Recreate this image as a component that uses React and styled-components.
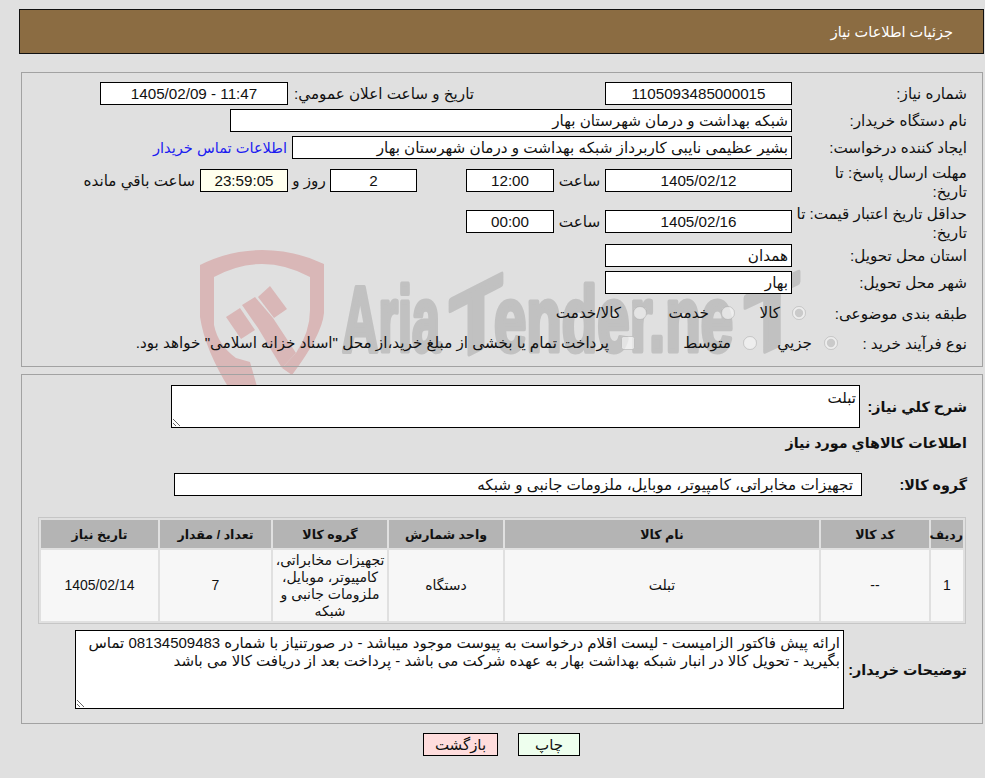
import React from "react";
import styled, { createGlobalStyle } from "styled-components";

const Global = createGlobalStyle`
  html, body { margin: 0; padding: 0; background: #e0e0e0; }
  body { font-family: "Liberation Sans", "DejaVu Sans", sans-serif; font-size: 15.2px; color: #111; }
  * { box-sizing: border-box; }
`;

const Page = styled.div`
  position: relative;
  width: 985px;
  height: 778px;
  overflow: hidden;
  padding-top: 9px;
`;

const Watermark = styled.svg`
  position: absolute;
  left: 0;
  top: 0;
  width: 985px;
  height: 778px;
  z-index: 0;
  pointer-events: none;
`;

const Content = styled.div`
  position: relative;
  z-index: 1;
`;

const Header = styled.header`
  height: 45px;
  margin: 0 1px 0 19px;
  border: 1px solid #111;
  background: #8b6c42;
  color: #fff;
  display: flex;
  align-items: center;
  padding-right: 30px;
  font-size: 14.5px;
`;

const Panel = styled.section`
  height: ${(p) => p.$h}px;
  margin: ${(p) => p.$top}px 2px 0 21px;
  border: 1px solid #a2a2a2;
  padding: ${(p) => p.$pt}px 15px 0 16px;
`;

const Row = styled.div`
  display: flex;
  align-items: center;
  margin-top: ${(p) => p.$top || 0}px;
  min-height: ${(p) => p.$h || 23}px;
`;

const Label = styled.div`
  flex: none;
  width: ${(p) => p.$w || 175}px;
  line-height: 19px;
  white-space: nowrap;
`;

const Strong = styled.div`
  flex: none;
  width: ${(p) => p.$w}px;
  font-weight: bold;
  font-size: 14.3px;
  white-space: nowrap;
`;

const Heading = styled.div`
  font-weight: bold;
  font-size: 14.3px;
  line-height: 20px;
  margin-top: 5px;
`;

const Inline = styled.div`
  display: flex;
  align-items: center;
  margin-bottom: ${(p) => p.$mb || 0}px;
`;

const Box = styled.div`
  flex: none;
  width: ${(p) => p.$w}px;
  height: 23px;
  border: 1px solid #000;
  background: ${(p) => p.$bg || "#fff"};
  text-align: ${(p) => (p.$center ? "center" : "right")};
  padding: 0 ${(p) => p.$pad ?? 3}px;
  line-height: 21px;
  white-space: nowrap;
  overflow: hidden;
`;

const Unit = styled.div`
  flex: none;
  width: ${(p) => p.$w}px;
  text-align: center;
`;

const Note = styled.div`
  flex: none;
  margin-right: ${(p) => p.$before || 0}px;
  width: ${(p) => p.$w || "auto"};
  white-space: nowrap;
`;

const Link = styled.a`
  color: #1c1cf0;
  text-decoration: none;
  font-size: 14.6px;
  margin-right: 5px;
  white-space: nowrap;
`;

const Choice = styled.label`
  display: flex;
  align-items: center;
  gap: 12px;
  width: ${(p) => p.$w || "auto"};
  flex: none;
  white-space: nowrap;
`;

const Radio = styled.input`
  width: 14px;
  height: 14px;
  margin: 0;
  flex: none;
`;

const Area = styled.textarea`
  display: block;
  flex: none;
  width: ${(p) => p.$w}px;
  height: ${(p) => p.$h}px;
  border: 1px solid #000;
  border-radius: 0;
  outline: none;
  background: #fff;
  color: #111;
  font-family: "Liberation Sans", "DejaVu Sans", sans-serif;
  font-size: 15px;
  line-height: 18px;
  padding: 3px;
  margin: 0;
`;

const Table = styled.table`
  width: 928px;
  margin: 21px 1px 0 0;
  table-layout: fixed;
  border-collapse: separate;
  border-spacing: 2px;
  border: 1px solid #c6c6c6;
`;

const Th = styled.th`
  width: ${(p) => p.$w}px;
  height: 28px;
  background: #b4b4b4;
  font-size: 12.6px;
  font-weight: bold;
  padding: 0;
`;

const Td = styled.td`
  height: 71px;
  background: #f7f7f7;
  font-size: 14px;
  line-height: 17px;
  text-align: center;
  padding: 0 ${(p) => p.$pad || 0}px;
`;

const Actions = styled.div`
  display: flex;
  justify-content: center;
  gap: 20px;
  margin-top: 9px;
  padding-left: 18px;
`;

const Button = styled.button`
  width: ${(p) => p.$w}px;
  height: 23px;
  border: 1px solid #000;
  border-radius: 0;
  background: ${(p) => p.$bg};
  color: #111;
  font-family: "Liberation Sans", "DejaVu Sans", sans-serif;
  font-size: 15px;
  padding: 0;
`;

const columns = [
  ["ردیف", 32],
  ["کد کالا", 108],
  ["نام کالا", 314],
  ["واحد شمارش", 114],
  ["گروه کالا", 114],
  ["تعداد / مقدار", 111],
  ["تاریخ نیاز", 117],
];

const buyerNote =
  "ارائه پیش فاکتور الزامیست - لیست اقلام درخواست به پیوست موجود میباشد - در صورتنیاز با شماره 08134509483 تماس بگیرید - تحویل کالا در انبار شبکه بهداشت بهار به عهده شرکت می باشد - پرداخت بعد از دریافت کالا می باشد";

const groupName = "تجهیزات مخابراتی، کامپیوتر، موبایل، ملزومات جانبی و شبکه";

const logoFont = {
  fill: "#c1c1c1",
  stroke: "#c1c1c1",
  strokeWidth: 5,
  strokeLinejoin: "round",
  fontFamily: "Liberation Sans, sans-serif",
  fontWeight: "bold",
  fontSize: 92,
  direction: "ltr",
  lengthAdjust: "spacingAndGlyphs",
};

export default function App() {
  return (
    <Page dir="rtl">
      <Global />
      <Watermark viewBox="0 0 985 778" aria-hidden="true">
        <path
          fill="#d9b7b7"
          d="M200 265 Q230 250 262 250 Q295 250 324 264 L324 313 Q322 335 292 375 L282 368 L296 353 Q310 332 310 310 L310 277 Q286 264 262 264 Q238 264 214 277 L214 325 Q218 345 236 358 L250 362 L258 390 L230 390 Q205 350 200 317 Z"
        />
        <path fill="#d9b7b7" d="M226 317 L240 308 L255 330 L241 339 Z" />
        <path fill="#d9b7b7" d="M242 305 L255 297 L273 318 L296 353 L282 368 L258 328 Z" />
        <path fill="#d9b7b7" d="M258 297 L270 286 L287 309 L274 318 Z" />
        <text x="342" y="351" textLength="98" {...logoFont}>Aria</text>
        <text x="450" y="351" textLength="52" transform="translate(0 14) skewY(-27) translate(0 228)" {...logoFont}>T</text>
        <text x="494" y="351" textLength="239" {...logoFont}>ender.ne</text>
        <text x="745" y="351" textLength="54" transform="translate(0 10) skewY(-25) translate(0 347)" {...logoFont}>T</text>
      </Watermark>
      <Content>
        <Header>جزئیات اطلاعات نیاز</Header>

        <Panel $h={295} $top={18} $pt={9}>
          <Row>
            <Label>شماره نیاز:</Label>
            <Box $w={187} $center>1105093485000015</Box>
            <Note $before={131} $w="186px">تاریخ و ساعت اعلان عمومي:</Note>
            <Box $w={188} $center>11:47 - 1405/02/09</Box>
          </Row>
          <Row $top={4}>
            <Label>نام دستگاه خریدار:</Label>
            <Box $w={562}>شبکه بهداشت و درمان شهرستان بهار</Box>
          </Row>
          <Row $top={4}>
            <Label>ایجاد کننده درخواست:</Label>
            <Box $w={500}>بشیر عظیمی نایبی کاربرداز شبکه بهداشت و درمان شهرستان بهار</Box>
            <Link href="#">اطلاعات تماس خریدار</Link>
          </Row>
          <Row $top={4} $h={38}>
            <Label>مهلت ارسال پاسخ: تا<br />تاریخ:</Label>
            <Inline $mb={3}>
              <Box $w={187} $center>1405/02/12</Box>
              <Unit $w={51}>ساعت</Unit>
              <Box $w={88} $center>12:00</Box>
              <Unit $w={49} />
              <Box $w={87} $center>2</Box>
              <Unit $w={42}>روز و</Unit>
              <Box $w={88} $center $bg="#ffffee">23:59:05</Box>
              <Note $before={5}>ساعت باقي مانده</Note>
            </Inline>
          </Row>
          <Row $top={3} $h={38}>
            <Label>حداقل تاریخ اعتبار قیمت: تا<br />تاریخ:</Label>
            <Inline $mb={3}>
              <Box $w={187} $center>1405/02/16</Box>
              <Unit $w={51}>ساعت</Unit>
              <Box $w={88} $center>00:00</Box>
            </Inline>
          </Row>
          <Row $top={2}>
            <Label>استان محل تحویل:</Label>
            <Box $w={187}>همدان</Box>
          </Row>
          <Row $top={4}>
            <Label>شهر محل تحویل:</Label>
            <Box $w={187}>بهار</Box>
          </Row>
          <Row $top={8} $h={22}>
            <Label $w={161}>طبقه بندی موضوعی:</Label>
            <Choice $w="71px"><Radio type="radio" name="kind" disabled defaultChecked />کالا</Choice>
            <Choice $w="88px"><Radio type="radio" name="kind" disabled />خدمت</Choice>
            <Choice><Radio type="radio" name="kind" disabled />کالا/خدمت</Choice>
          </Row>
          <Row $top={8} $h={22}>
            <Label $w={129}>نوع فرآیند خرید :</Label>
            <Choice $w="81px"><Radio type="radio" name="proc" disabled defaultChecked />جزیي</Choice>
            <Choice $w="122px"><Radio type="radio" name="proc" disabled />متوسط</Choice>
            <Choice><Radio type="checkbox" disabled />پرداخت تمام یا بخشی از مبلغ خرید،از محل "اسناد خزانه اسلامی" خواهد بود.</Choice>
          </Row>
        </Panel>

        <Panel $h={350} $top={7} $pt={10}>
          <Row>
            <Strong $w={107}>شرح کلي نیاز:</Strong>
            <Area $w={689} $h={43} readOnly value="تبلت" />
          </Row>
          <Heading>اطلاعات کالاهاي مورد نیاز</Heading>
          <Row $top={20}>
            <Strong $w={105}>گروه کالا:</Strong>
            <Box $w={688} $pad={8}>{groupName}</Box>
          </Row>
          <Table>
            <thead>
              <tr>
                {columns.map(([title, w]) => (
                  <Th key={title} $w={w}>{title}</Th>
                ))}
              </tr>
            </thead>
            <tbody>
              <tr>
                <Td>1</Td>
                <Td>--</Td>
                <Td>تبلت</Td>
                <Td>دستگاه</Td>
                <Td $pad={2}>{groupName}</Td>
                <Td>7</Td>
                <Td>1405/02/14</Td>
              </tr>
            </tbody>
          </Table>
          <Row $top={6}>
            <Strong $w={123}>توضیحات خریدار:</Strong>
            <Area $w={769} $h={79} readOnly value={buyerNote} />
          </Row>
        </Panel>

        <Actions>
          <Button $w={62} $bg="#eeffee">چاپ</Button>
          <Button $w={75} $bg="#ffdddd">بازگشت</Button>
        </Actions>
      </Content>
    </Page>
  );
}
